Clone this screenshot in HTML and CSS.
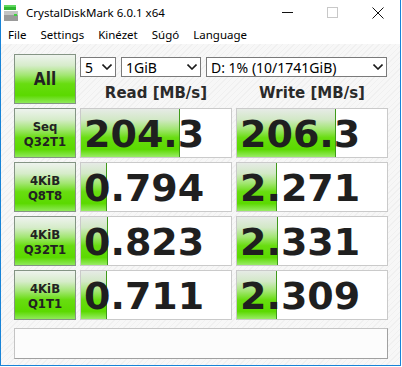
FILE: index.html
```html
<!DOCTYPE html>
<html lang="hu">
<head>
    <meta charset="UTF-8">
    <title>CrystalDiskMark 6.0.1 x64</title>
    <link rel="stylesheet" href="styles.css">
</head>
<body>

<div class="window">
    <div class="titlebar">
        <svg class="app-icon" width="16" height="16" viewBox="0 0 16 16">
            <rect x="0" y="0" width="12" height="5" fill="#2fb52f"/>
            <rect x="0" y="0" width="12" height="2" fill="#5fd85f"/>
            <rect x="0" y="6" width="14" height="10" fill="#9a9a9a"/>
            <rect x="0" y="6" width="14" height="4" fill="#c4c4c4"/>
            <rect x="10" y="9" width="3" height="2" fill="#3fd03f"/>
        </svg>
        <span class="title">CrystalDiskMark 6.0.1 x64</span>
        <div class="controls">
            <span class="ctl">
                <svg width="11" height="11" viewBox="0 0 11 11"><path d="M0 5.5H11" stroke="#111" stroke-width="1"/></svg>
            </span>
            <span class="ctl">
                <svg width="11" height="11" viewBox="0 0 11 11"><rect x="0.5" y="0.5" width="10" height="10" fill="none" stroke="#c8c8c8" stroke-width="1"/></svg>
            </span>
            <span class="ctl">
                <svg width="12" height="12" viewBox="0 0 12 12"><path d="M0.5 0.5L11.5 11.5M11.5 0.5L0.5 11.5" stroke="#111" stroke-width="1"/></svg>
            </span>
        </div>
    </div>

    <div class="menubar">
        <span>File</span>
        <span>Settings</span>
        <span>Kinézet</span>
        <span>Súgó</span>
        <span>Language</span>
    </div>

    <div class="client">
        <div class="grid">
            <div class="label all">All</div>
            <div class="top">
                <div class="selects">
                    <div class="select sel-count">5<svg width="10" height="6" viewBox="0 0 10 6"><path d="M0.5 0.5L5 5L9.5 0.5" fill="none" stroke="#1a1a1a" stroke-width="1.6"/></svg></div>
                    <div class="select sel-size">1GiB<svg width="10" height="6" viewBox="0 0 10 6"><path d="M0.5 0.5L5 5L9.5 0.5" fill="none" stroke="#1a1a1a" stroke-width="1.6"/></svg></div>
                    <div class="select sel-drive">D: 1% (10/1741GiB)<svg width="10" height="6" viewBox="0 0 10 6"><path d="M0.5 0.5L5 5L9.5 0.5" fill="none" stroke="#1a1a1a" stroke-width="1.6"/></svg></div>
                </div>
                <div class="heads">
                    <div>Read [MB/s]</div>
                    <div>Write [MB/s]</div>
                </div>
            </div>

            <div class="label">Seq<br>Q32T1</div>
            <div class="value"><div class="bar" style="width: 98px"></div><span>204.3</span></div>
            <div class="value"><div class="bar" style="width: 98px"></div><span>206.3</span></div>

            <div class="label">4KiB<br>Q8T8</div>
            <div class="value"><div class="bar" style="width: 25px"></div><span>0.794</span></div>
            <div class="value"><div class="bar" style="width: 39px"></div><span>2.271</span></div>

            <div class="label">4KiB<br>Q32T1</div>
            <div class="value"><div class="bar" style="width: 26px"></div><span>0.823</span></div>
            <div class="value"><div class="bar" style="width: 40px"></div><span>2.331</span></div>

            <div class="label">4KiB<br>Q1T1</div>
            <div class="value"><div class="bar" style="width: 25px"></div><span>0.711</span></div>
            <div class="value"><div class="bar" style="width: 39px"></div><span>2.309</span></div>
        </div>

        <div class="comment"></div>
    </div>
</div>

</body>
</html>
```

FILE: styles.css
```css
html, body {
    margin: 0;
    padding: 0;
    background: #ffffff;
}

.window {
    width: 399px;
    height: 365px;
    border: 1px solid #1883d7;
    border-top: none;
    background: #ffffff;
    display: flex;
    flex-direction: column;
    font-family: "Noto Sans", sans-serif;
    color: #000000;
}

/* barra del titolo */
.titlebar {
    height: 25px;
    display: flex;
    align-items: center;
    flex-shrink: 0;
}

.app-icon {
    margin-left: 3px;
    margin-top: 1px;
}

.title {
    margin-left: 6px;
    font-size: 11.5px;
    color: #000;
}

.controls {
    margin-left: auto;
    display: flex;
    height: 25px;
}

.ctl {
    width: 45px;
    display: flex;
    align-items: center;
    justify-content: center;
}

/* menu */
.menubar {
    height: 19px;
    display: flex;
    align-items: center;
    font-size: 11.5px;
    flex-shrink: 0;
}

.menubar span {
    padding: 0 7px;
}

/* area principale */
.client {
    flex: 1;
    padding: 10px 12px 0 13px;
    background: repeating-linear-gradient(135deg, #f7f7f7 0 3px, #f0f0f0 3px 4px);
}

.grid {
    display: grid;
    grid-template-columns: 62px 152px 152px;
    grid-auto-rows: 50px;
    gap: 4px;
}

.label {
    box-sizing: border-box;
    border: 1px solid #849484;
    background: linear-gradient(#eef3ee 0%, #d6ecca 22%, #a2e672 42%, #68dd10 60%, #5bd900 84%, #8fe95a 100%);
    display: flex;
    align-items: center;
    justify-content: center;
    text-align: center;
    font-family: "DejaVu Sans Condensed", "DejaVu Sans", sans-serif;
    font-weight: bold;
    font-size: 13px;
    line-height: 15px;
    color: #222;
    padding-top: 1px;
}

.label.all {
    font-size: 17px;
}

.top {
    grid-column: 2 / 4;
    display: flex;
    flex-direction: column;
}

.selects {
    display: flex;
    gap: 5px;
    margin-top: 3px;
}

.select {
    box-sizing: border-box;
    height: 20px;
    border: 1px solid #7a7a7a;
    background: #ffffff;
    display: flex;
    align-items: center;
    justify-content: space-between;
    padding: 0 3px 0 4px;
    font-size: 14px;
    color: #000;
}

.sel-count { width: 36px; }
.sel-size { width: 80px; }
.sel-drive { width: 181px; }

.heads {
    display: grid;
    grid-template-columns: 152px 152px;
    gap: 4px;
    margin-top: 8px;
    font-family: "DejaVu Sans", sans-serif;
    font-weight: bold;
    font-size: 15px;
    line-height: 17px;
    color: #2a2a2a;
    text-align: center;
}

.value {
    box-sizing: border-box;
    position: relative;
    border: 1px solid #cacaca;
    background: #ffffff;
    display: flex;
    align-items: center;
    padding-left: 3px;
}

.bar {
    position: absolute;
    left: 0;
    top: 0;
    bottom: 0;
    border-right: 1px solid #3f9a1a;
    background: linear-gradient(#e6ebe6 0%, #d2e8c6 22%, #a2e672 42%, #68dd10 60%, #5bd900 84%, #99ec66 100%);
}

.value span {
    position: relative;
    font-family: "DejaVu Sans", sans-serif;
    font-weight: bold;
    font-size: 38px;
    line-height: 1;
    color: #1f1f1f;
    margin-top: 1px;
}

.comment {
    box-sizing: border-box;
    height: 31px;
    margin-top: 8px;
    border: 1px solid #c4c4c4;
    border-right-color: #a0a0a0;
    border-bottom-color: #a0a0a0;
    background: #fcfcfc;
}
```
